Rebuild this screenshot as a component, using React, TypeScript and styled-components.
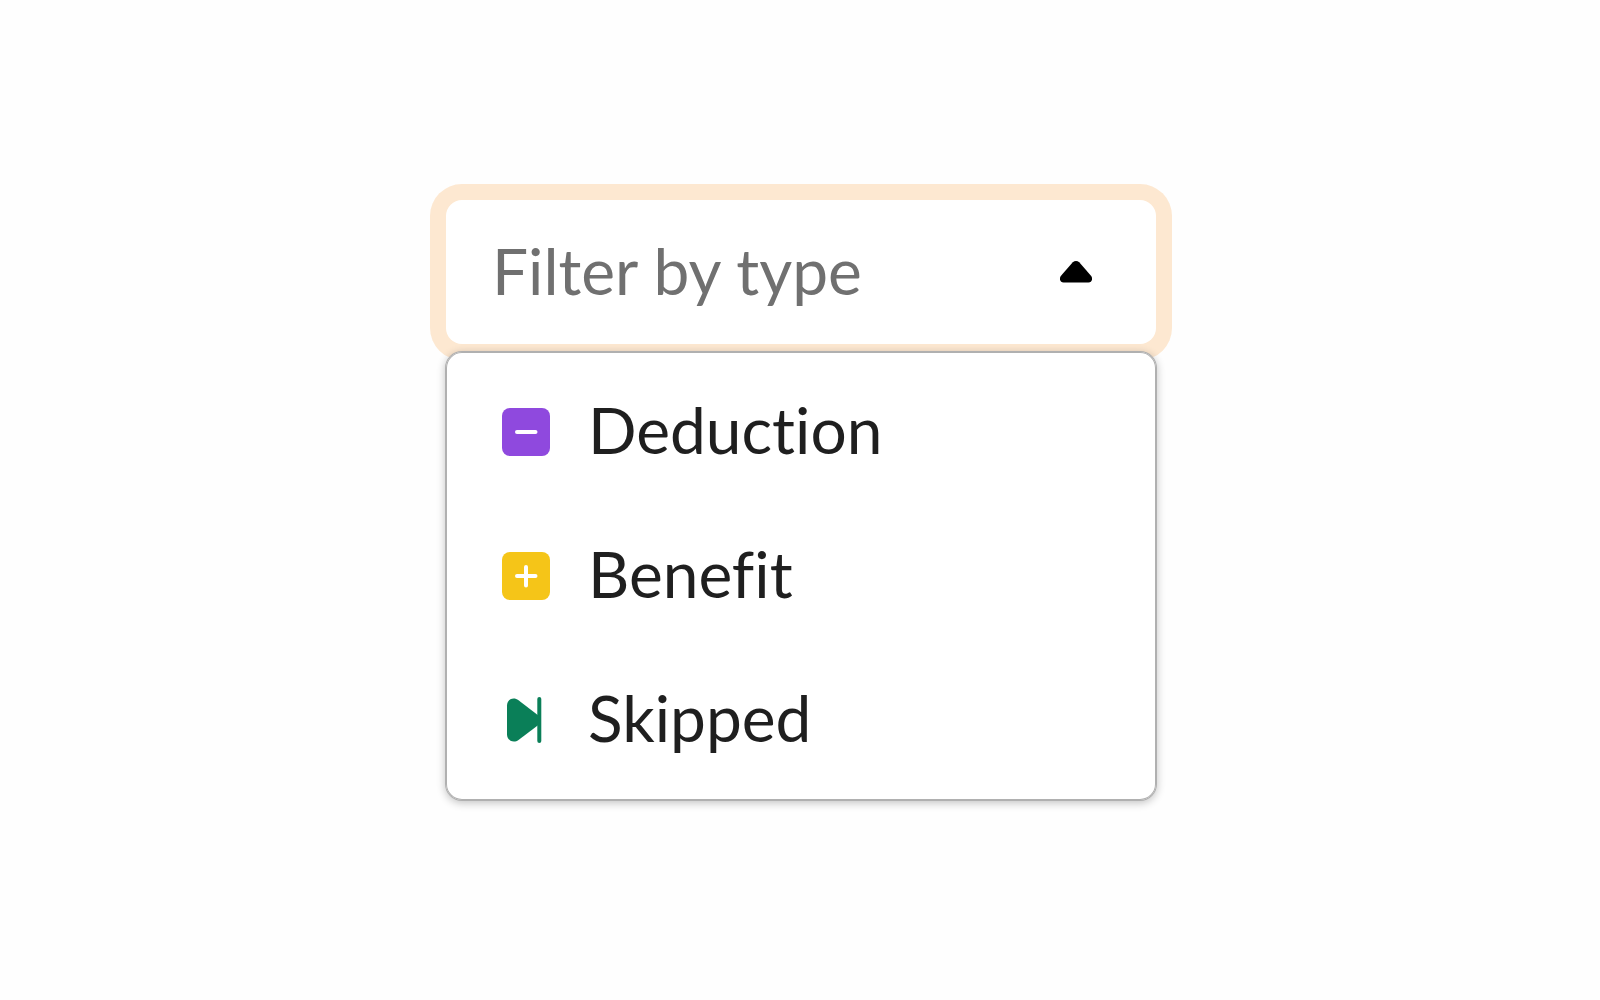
import React, { useState } from "react";
import styled, { createGlobalStyle } from "styled-components";

const GlobalStyle = createGlobalStyle`
  *, *::before, *::after {
    box-sizing: border-box;
  }
  body {
    margin: 0;
    background: #fefefe;
    color: #1f1f1f;
    font-family: Lato, "Open Sans", sans-serif;
    font-size: 64px;
    font-variant-ligatures: none;
    line-height: 80px;
  }
`;

const Page = styled.main`
  display: flex;
  flex-direction: column;
  align-items: center;
  padding: 200px 32px 200px 34px;
`;

const Dropdown = styled.div`
  display: flex;
  flex-direction: column;
  gap: 8px;
  width: 100%;
  max-width: 710px;
`;

const Control = styled.div`
  display: flex;
  align-items: center;
  gap: 16px;
  height: 144px;
  padding: 0 64px 0 46px;
  border-radius: 16px;
  background: #fff;
  box-shadow: 0 0 0 16px #fde8d1;
`;

const FilterInput = styled.input`
  flex: 1;
  min-width: 0;
  height: 96px;
  padding: 0 0 4px;
  border: 0;
  outline: 0;
  background: transparent;
  color: inherit;
  font: inherit;
  cursor: pointer;

  &::placeholder {
    color: #707070;
    opacity: 1;
  }
`;

const ToggleButton = styled.button`
  display: flex;
  padding: 0;
  border: 0;
  background: transparent;
  color: #000;
  cursor: pointer;
`;

const Caret = styled.svg<{ $open: boolean }>`
  width: 32px;
  height: 22px;
  transform: ${({ $open }) => ($open ? "none" : "rotate(180deg)")};
`;

const Menu = styled.ul`
  position: relative;
  margin: 0;
  padding: 8px 0;
  list-style: none;
  border-radius: 16px;
  background: #fff;
  box-shadow: 0 0 0 1px #b0b0b0, inset 0 0 0 1px #b0b0b0,
    0 2px 8px 1px rgba(0, 0, 0, 0.24);
`;

const Option = styled.li`
  display: flex;
  align-items: center;
  gap: 38px;
  height: 144px;
  padding: 0 56px;
  cursor: pointer;
`;

const OptionIcon = styled.svg`
  flex: none;
  width: 48px;
  height: 48px;
`;

const OptionLabel = styled.span`
  padding-bottom: 4px;
`;

const MinusIcon = () => (
  <OptionIcon viewBox="0 0 48 48" aria-hidden="true">
    <rect width="48" height="48" rx="8" fill="#8f49de" />
    <path d="M15 24h18.500" stroke="#fff" strokeWidth="4" strokeLinecap="round" />
  </OptionIcon>
);

const PlusIcon = () => (
  <OptionIcon viewBox="0 0 48 48" aria-hidden="true">
    <rect width="48" height="48" rx="8" fill="#f5c518" />
    <path d="M15 24h18.500M24 15v18.500" stroke="#fff" strokeWidth="4" strokeLinecap="round" />
  </OptionIcon>
);

const SkipIcon = () => (
  <OptionIcon viewBox="0 0 48 48" aria-hidden="true">
    <path
      d="M5 9.500C5 3.500 11.500 0.500 16.500 4.300L37 20V28.500L16.500 44C11.500 47.500 5 44.500 5 38.500Z"
      fill="#0a7f58"
    />
    <path d="M37.300 3v42" stroke="#0a7f58" strokeWidth="4" strokeLinecap="round" />
  </OptionIcon>
);

const options = [
  { label: "Deduction", Icon: MinusIcon },
  { label: "Benefit", Icon: PlusIcon },
  { label: "Skipped", Icon: SkipIcon },
];

export default function App() {
  const [open, setOpen] = useState(true);
  const [selected, setSelected] = useState("");

  return (
    <>
      <GlobalStyle />
      <Page>
        <Dropdown>
          <Control>
            <FilterInput
              role="combobox"
              aria-label="Filter by type"
              aria-expanded={open}
              aria-controls="type-options"
              placeholder="Filter by type"
              value={selected}
              readOnly
              onClick={() => setOpen(true)}
            />
            <ToggleButton
              type="button"
              aria-label="Toggle options"
              onClick={() => setOpen(!open)}
            >
              <Caret $open={open} viewBox="0 0 32 22" aria-hidden="true">
                <path
                  d="M12.800 1.300C14.600 -0.400 17.400 -0.400 19.200 1.300L31 14.800C33.200 17.500 32 21.600 28.500 21.600H3.500C0 21.600 -1.200 17.500 1 14.800Z"
                  fill="currentColor"
                />
              </Caret>
            </ToggleButton>
          </Control>
          {open && (
            <Menu id="type-options" role="listbox" aria-label="Type">
              {options.map(({ label, Icon }) => (
                <Option
                  key={label}
                  role="option"
                  aria-selected={selected === label}
                  onClick={() => {
                    setSelected(label);
                    setOpen(false);
                  }}
                >
                  <Icon />
                  <OptionLabel>{label}</OptionLabel>
                </Option>
              ))}
            </Menu>
          )}
        </Dropdown>
      </Page>
    </>
  );
}
